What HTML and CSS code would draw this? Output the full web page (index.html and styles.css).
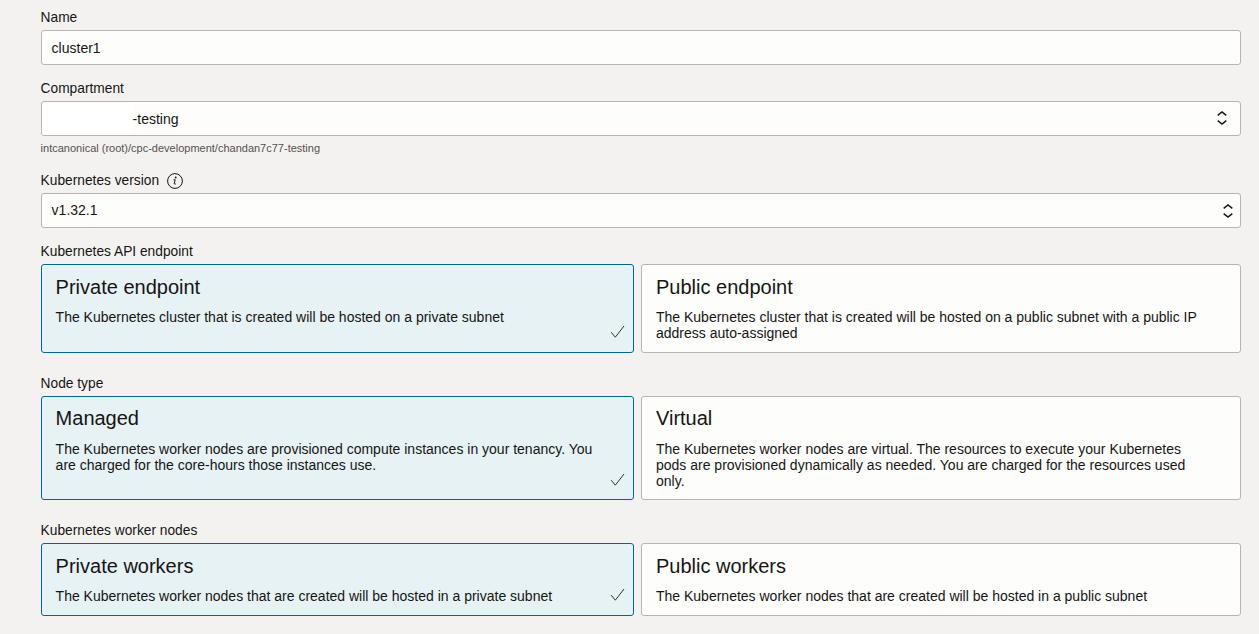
FILE: index.html
```html
<!DOCTYPE html>
<html lang="en">
<head>
<meta charset="utf-8">
<title>Create cluster</title>
<link rel="stylesheet" href="styles.css">
</head>
<body>
<svg width="0" height="0" class="defs">
  <symbol id="updown" viewBox="0 0 12 18"><path d="M1.7 6.3 L6 2.9 L10.3 6.3 M1.7 11.7 L6 15.1 L10.3 11.7"/></symbol>
  <symbol id="check" viewBox="0 0 16 16"><path d="M1.2 8.2 L5.3 13.2 L14 2"/></symbol>
</svg>
<main class="form">
  <section class="group">
    <div class="label">Name</div>
    <div class="field">cluster1</div>
  </section>
  <section class="group">
    <div class="label">Compartment</div>
    <div class="field select wide"><span class="value"><span class="mask"></span>-testing</span><svg class="updown"><use href="#updown"/></svg></div>
    <div class="hint">intcanonical (root)/cpc-development/chandan7c77-testing</div>
  </section>
  <section class="group">
    <div class="label">Kubernetes version
      <svg class="info" viewBox="0 0 16 16"><circle cx="8" cy="8" r="7.4"/><path d="M6.5 6.8 H8.2 L7.2 10.7 Q7.2 11.4 8.8 10.9"/><circle class="dot" cx="8.7" cy="4.5" r=".9"/></svg>
    </div>
    <div class="field select version"><span>v1.32.1</span><svg class="updown"><use href="#updown"/></svg></div>
  </section>
  <section class="group cards-group">
    <div class="label">Kubernetes API endpoint</div>
    <div class="cards endpoint">
      <div class="card selected"><h3>Private endpoint</h3><p>The Kubernetes cluster that is created will be hosted on a private subnet</p><svg class="check"><use href="#check"/></svg></div>
      <div class="card"><h3>Public endpoint</h3><p>The Kubernetes cluster that is created will be hosted on a public subnet with a public IP address auto-assigned</p></div>
    </div>
  </section>
  <section class="group cards-group">
    <div class="label">Node type</div>
    <div class="cards nodes">
      <div class="card selected"><h3>Managed</h3><p>The Kubernetes worker nodes are provisioned compute instances in your tenancy. You are charged for the core-hours those instances use.</p><svg class="check"><use href="#check"/></svg></div>
      <div class="card"><h3>Virtual</h3><p>The Kubernetes worker nodes are virtual. The resources to execute your Kubernetes pods are provisioned dynamically as needed. You are charged for the resources used only.</p></div>
    </div>
  </section>
  <section class="group">
    <div class="label">Kubernetes worker nodes</div>
    <div class="cards workers">
      <div class="card selected"><h3>Private workers</h3><p>The Kubernetes worker nodes that are created will be hosted in a private subnet</p><svg class="check"><use href="#check"/></svg></div>
      <div class="card"><h3>Public workers</h3><p>The Kubernetes worker nodes that are created will be hosted in a public subnet</p></div>
    </div>
  </section>
</main>
</body>
</html>
```
FILE: styles.css
```css
* { box-sizing: border-box; }
body {
  margin: 0;
  height: 634px;
  overflow: hidden;
  background: #f4f2f1;
  color: #161513;
  font-family: "Liberation Sans", Arial, sans-serif;
  font-size: 14px;
  line-height: 16px;
}
.defs { display: none; }
svg { flex: none; fill: none; stroke: #161513; }
.form { padding: 10px 18px 0 40.6px; }
.group { margin-bottom: 16px; }
.cards-group { margin-bottom: 23px; }
.label {
  display: flex;
  align-items: center;
  gap: 8px;
  height: 16px;
  margin-bottom: 4px;
  font-size: 13.75px;
}
.info { width: 16px; height: 16px; stroke-width: 1; }
.info .dot { fill: #161513; stroke: none; }
.field {
  display: flex;
  align-items: center;
  height: 35px;
  padding: 1px 10px 0;
  border: 1px solid #b9b4b0;
  border-radius: 3px;
  background: #fdfdfb;
}
.select { justify-content: space-between; }
.wide { padding: 0 12px 0 0; }
.wide .updown { margin-top: -2px; }
.value { display: flex; align-items: center; padding-top: 1px; }
.mask { width: 91px; height: 32px; margin-top: -1px; border-radius: 2px; background: #fff; }
.version { padding: 0 6px 0 10px; }
.version span { margin-top: -1px; }
.updown { width: 12px; height: 18px; stroke-width: 1.5; }
.hint {
  margin: 5px 0 18px;
  height: 14px;
  line-height: 14px;
  font-size: 11px;
  color: #55514e;
}
.cards { display: grid; grid-template-columns: 593px 1fr; gap: 7.4px; }
.endpoint { height: 89px; }
.nodes { height: 104px; }
.workers { height: 73px; }
.card {
  position: relative;
  padding: 9px 40px 0 14px;
  border: 1px solid #b9b4b0;
  border-radius: 3px;
  background: #fdfdfb;
}
.selected { border-color: #00688c; background: #e6f2f4; }
.card h3 { margin: 0 0 9px; font-size: 20px; line-height: 26px; font-weight: 400; }
.nodes .card { padding-top: 8px; }
.nodes h3 { margin-bottom: 10px; }
.card p { margin: 0; }
.check { position: absolute; right: 7px; bottom: 12px; width: 16px; height: 16px; stroke: #33312f; stroke-width: 1; }
.nodes .check { bottom: 11px; }
```
